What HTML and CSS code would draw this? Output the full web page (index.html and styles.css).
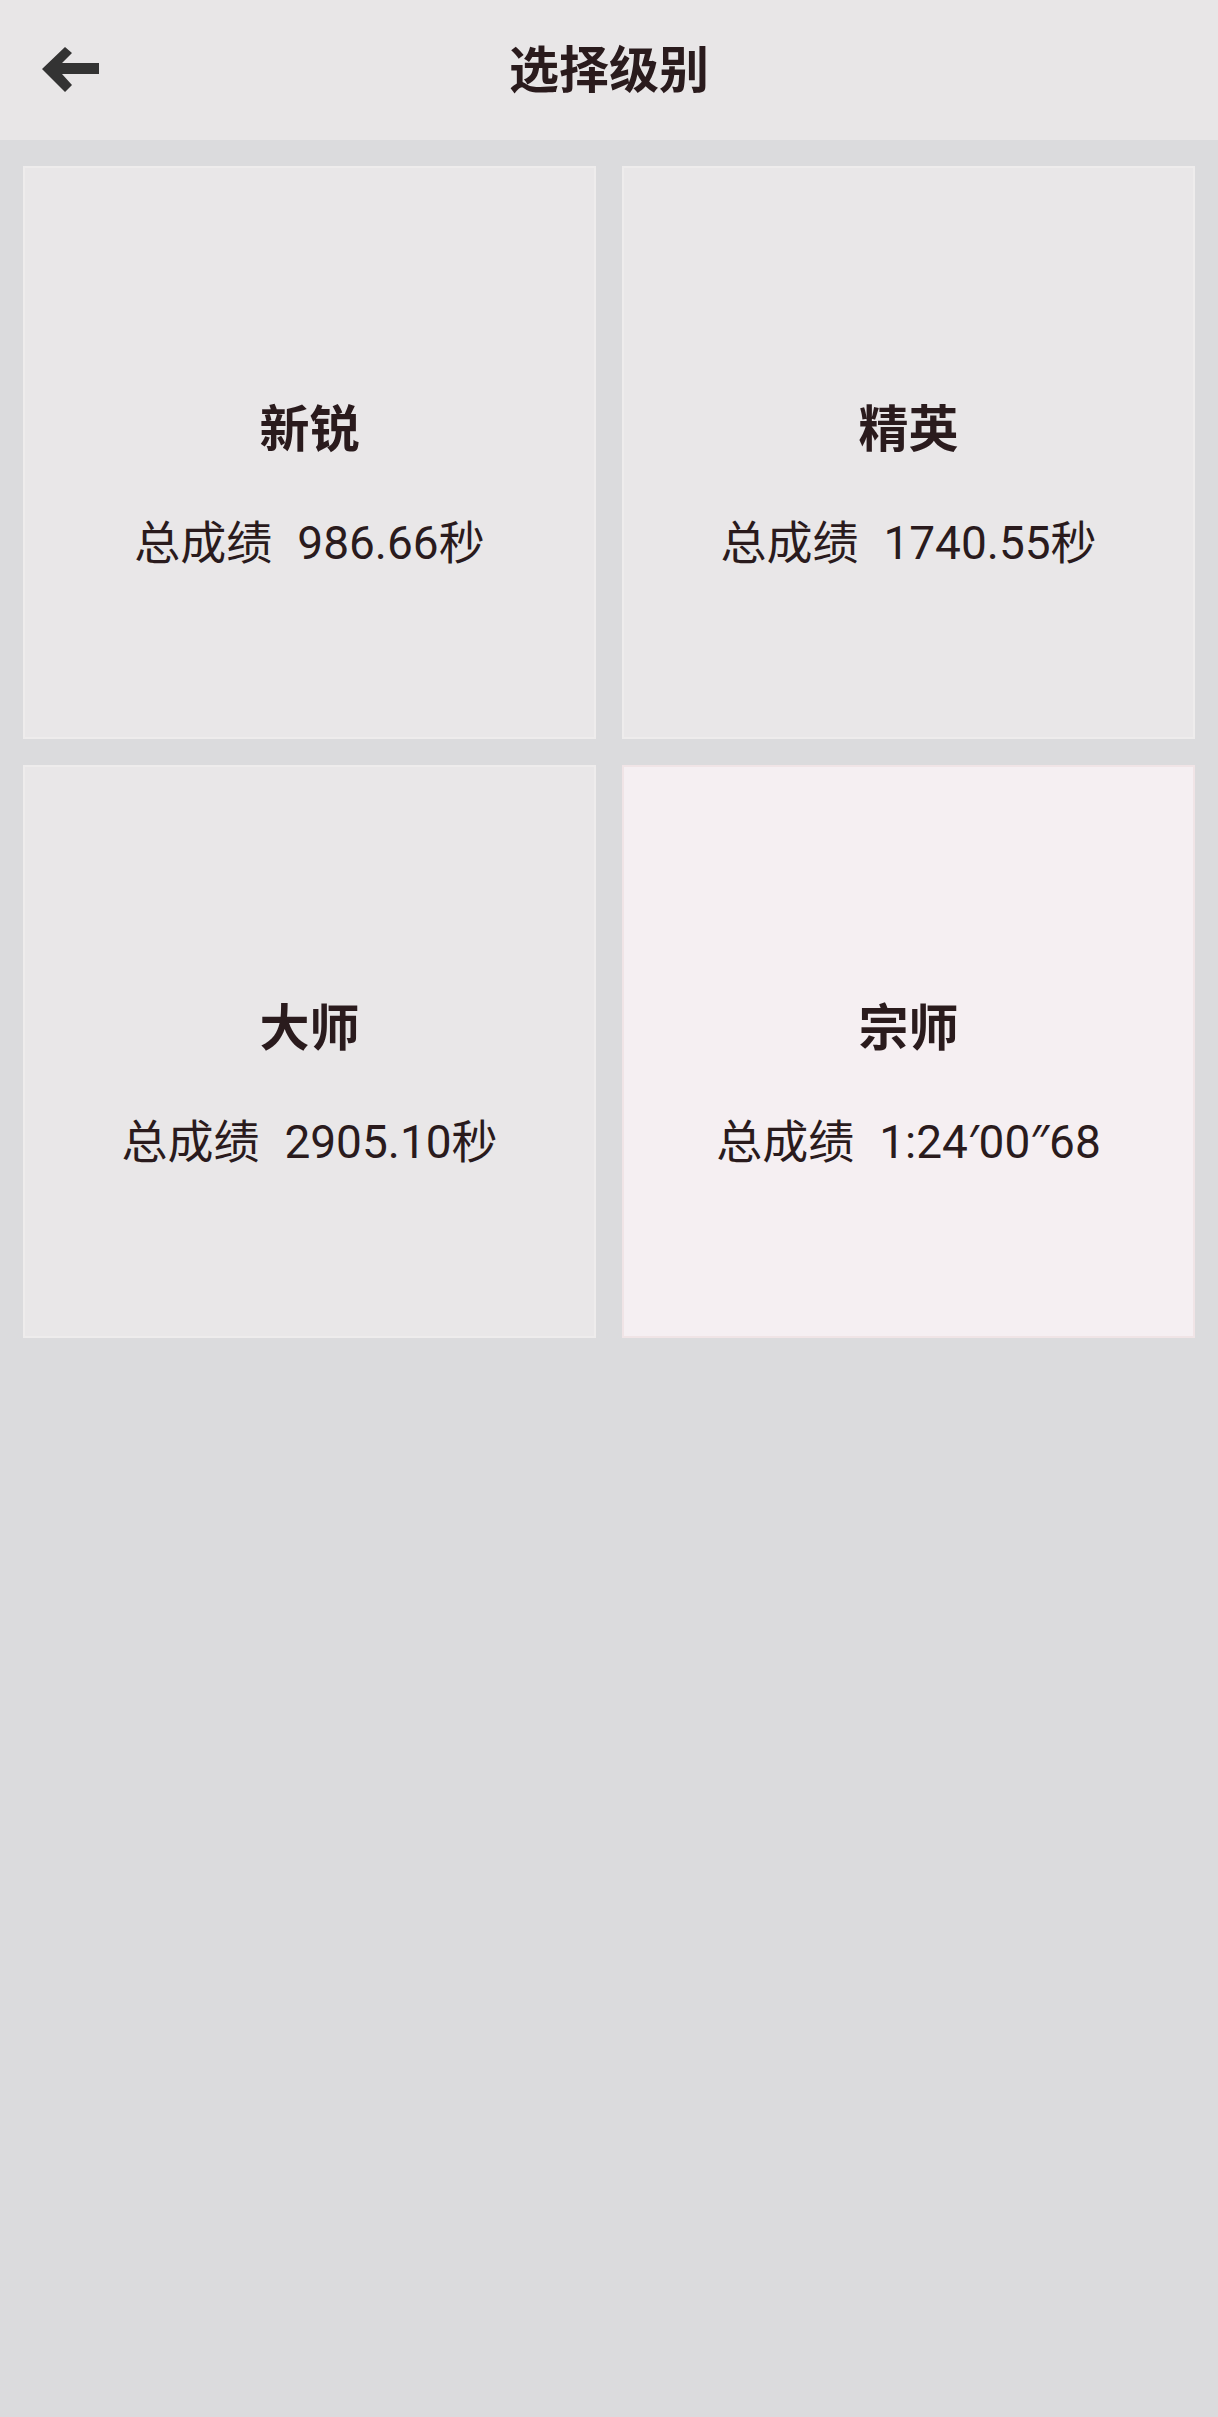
FILE: index.html
```html
<!DOCTYPE html>
<html lang="zh-CN">
<head>
<meta charset="utf-8">
<title>选择级别</title>
<link rel="stylesheet" href="styles.css">
</head>
<body>
<header class="topbar">
  <div class="back">
    <svg class="back-icon" viewBox="40 44 62 50" width="62" height="50" aria-hidden="true">
      <polygon points="42,68 65,46 72,52 62,62 99,62 99,73 62,73 72,84 65,91" fill="#333333"/>
    </svg>
  </div>
  <h1 class="title">选择级别</h1>
  <div class="spacer"></div>
</header>
<main class="grid">
  <div class="card">
    <div class="card-title">新锐</div>
    <div class="card-score"><span class="label">总成绩</span><span class="value">986.66秒</span></div>
  </div>
  <div class="card">
    <div class="card-title">精英</div>
    <div class="card-score"><span class="label">总成绩</span><span class="value">1740.55秒</span></div>
  </div>
  <div class="card">
    <div class="card-title">大师</div>
    <div class="card-score"><span class="label">总成绩</span><span class="value">2905.10秒</span></div>
  </div>
  <div class="card card-active">
    <div class="card-title">宗师</div>
    <div class="card-score"><span class="label">总成绩</span><span class="value">1:24<span class="mark">′</span>00<span class="mark">″</span>68</span></div>
  </div>
</main>
</body>
</html>
```
FILE: styles.css
```css
html, body {
  margin: 0;
  padding: 0;
}
body {
  background: #dbdbdd;
  min-height: 2417px;
  font-family: Roboto, "Noto Sans CJK SC", sans-serif;
  color: #2a1b1d;
}
.topbar {
  height: 140px;
  background: #e8e6e7;
  display: grid;
  grid-template-columns: 1fr auto 1fr;
  align-items: center;
}
.back {
  padding-left: 40px;
  display: flex;
  align-items: center;
}
.back-icon {
  display: block;
}
.title {
  margin: 0;
  padding-bottom: 8px;
  font-family: "Noto Sans CJK SC", sans-serif;
  font-weight: 700;
  font-size: 50px;
  line-height: 60px;
  color: #2a1b1d;
}
.grid {
  display: grid;
  grid-template-columns: 1fr 1fr;
  gap: 26px;
  padding: 26px 23px;
}
.card {
  aspect-ratio: 1 / 1;
  background: #e9e7e8;
  border: 2px solid #eeecec;
  box-sizing: border-box;
  display: flex;
  flex-direction: column;
  align-items: center;
  padding-top: 227px;
}
.card-active {
  background: #f5eff2;
  border-color: #f0e4e6;
}
.card-title {
  font-family: "Noto Sans CJK SC", sans-serif;
  font-weight: 700;
  font-size: 50px;
  line-height: 60px;
}
.card-score {
  margin-top: 54px;
  font-size: 46px;
  line-height: 60px;
  font-weight: 400;
  white-space: nowrap;
}
.label {
  font-family: "Noto Sans CJK SC", sans-serif;
}
.value {
  margin-left: 25px;
}
.mark {
  font-family: "Noto Sans", sans-serif;
}
```
